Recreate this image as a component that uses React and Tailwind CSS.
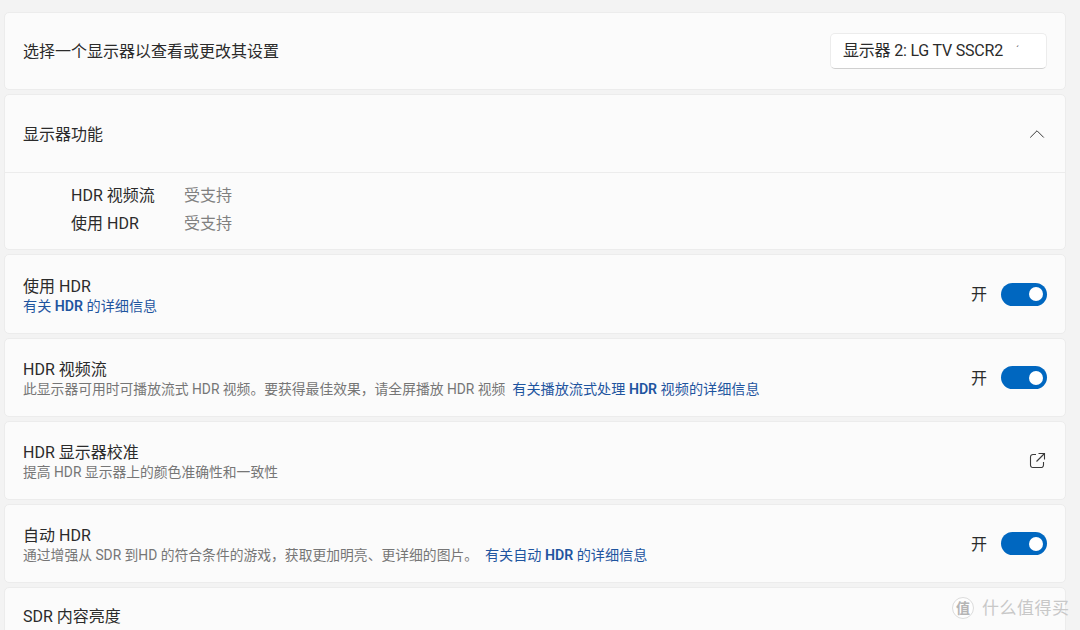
import { ChevronUp } from 'lucide-react'

const font = { fontFamily: 'Roboto, "Noto Sans CJK SC", sans-serif' }

function Toggle() {
  return (
    <div className="flex items-center gap-[14px]">
      <span className="text-[16px] text-[#2b2b2b] pt-[2px]">开</span>
      <div className="w-[46px] h-[23px] rounded-full bg-[#0067c0] flex items-center justify-end pr-[3px]">
        <div className="w-[14px] h-[14px] rounded-full bg-white mr-[1px]" />
      </div>
    </div>
  )
}

function Row({ title, children, right, className = '' }) {
  return (
    <div className={`bg-[#fbfbfb] border border-[#ececec] rounded-[5px] flex items-center justify-between px-[18px] ${className}`}>
      <div className="pt-[4px]">
        <div className="text-[16px] leading-[20px] text-[#2b2b2b]">{title}</div>
        <div className="text-[13.8px] leading-[19px] text-[#767676] whitespace-pre">{children}</div>
      </div>
      {right}
    </div>
  )
}

function Link({ children }) {
  return <span className="text-[14.15px] text-[#1f559f]">{children}</span>
}

function OpenIcon() {
  return (
    <svg width="17" height="17" viewBox="0 0 17 17" fill="none" stroke="#3a3a3a" strokeWidth="1.1" className="mr-[1px]">
      <path d="M7 2.500H4a2.500 2.500 0 0 0-2.500 2.500v8A2.500 2.500 0 0 0 4 15.500h8a2.500 2.500 0 0 0 2.500-2.500v-3" />
      <path d="M9.500 1.500h6v6M15.500 1.500 7.500 9.500" />
    </svg>
  )
}

export default function App() {
  return (
    <div style={font} className="relative w-[1080px] h-[630px] overflow-hidden bg-[#f3f3f3] pl-[4px] pr-[14px] pt-[12px] flex flex-col gap-[4px]">
      <div className="h-[78px] shrink-0 bg-[#fbfbfb] border border-[#ececec] rounded-[5px] flex items-center justify-between px-[18px]">
        <span className="text-[16px] text-[#2b2b2b] pt-[1px]">选择一个显示器以查看或更改其设置</span>
        <div className="w-[217px] h-[36px] bg-white border border-[#ececec] border-b-[#d0d0d0] rounded-[5px] flex items-center pl-[12px] text-[16px] text-[#2b2b2b]">
          <span className="tracking-[-0.2px]">显示器 2: LG TV SSCR2</span>
          <span className="ml-[13px] text-[10px] leading-none text-[#555]">´</span>
        </div>
      </div>

      <div className="h-[156px] shrink-0 bg-[#fbfbfb] border border-[#ececec] rounded-[5px] flex flex-col">
        <div className="h-[78px] shrink-0 border-b border-[#ececec] flex items-center justify-between pl-[18px] pr-[15px]">
          <span className="text-[16px] text-[#2b2b2b] pt-[2px]">显示器功能</span>
          <ChevronUp size={26} strokeWidth={0.9} className="text-[#333]" />
        </div>
        <div className="pl-[66px] pt-[9px] grid grid-cols-[113px_1fr] auto-rows-[28px] items-center text-[16px]">
          <span className="text-[#2b2b2b]">HDR 视频流</span>
          <span className="text-[#808080]">受支持</span>
          <span className="text-[#2b2b2b]">使用 HDR</span>
          <span className="text-[#808080]">受支持</span>
        </div>
      </div>

      <Row title="使用 HDR" right={<Toggle />} className="h-[80px] shrink-0">
        <Link>有关 <b className="font-semibold">HDR</b> 的详细信息</Link>
      </Row>

      <Row title="HDR 视频流" right={<Toggle />} className="h-[79px] shrink-0">
        此显示器可用时可播放流式 HDR 视频。要获得最佳效果，请全屏播放 HDR 视频  <Link>有关播放流式处理 <b className="font-semibold">HDR</b> 视频的详细信息</Link>
      </Row>

      <Row title="HDR 显示器校准" right={<OpenIcon />} className="h-[79px] shrink-0">
        提高 HDR 显示器上的颜色准确性和一致性
      </Row>

      <Row title="自动 HDR" right={<Toggle />} className="h-[79px] shrink-0">
        通过增强从 SDR 到HD 的符合条件的游戏，获取更加明亮、更详细的图片。  <Link>有关自动 <b className="font-semibold">HDR</b> 的详细信息</Link>
      </Row>

      <div className="h-[79px] shrink-0 bg-[#fbfbfb] border border-[#ececec] rounded-[5px] px-[18px] pt-[19px]">
        <div className="text-[16px] leading-[20px] text-[#2b2b2b]">SDR 内容亮度</div>
        <div className="text-[13.8px] leading-[21px] text-[#767676] whitespace-pre">将此内容与您的屏幕亮度进行比较，然后拖动滑块，直到达到您喜欢的亮度和色彩效果</div>
      </div>

      {/* watermark */}
      <div className="absolute left-[952px] top-[597px] flex items-center gap-[8px] text-[#c8c8c8]">
        <div className="w-[22px] h-[22px] rounded-full bg-white/80 border border-[#dcdcdc] flex items-center justify-center text-[14px] font-bold text-[#b5b5b5]">值</div>
        <span className="text-[17px] tracking-[0.5px] leading-none">什么值得买</span>
      </div>
    </div>
  )
}
